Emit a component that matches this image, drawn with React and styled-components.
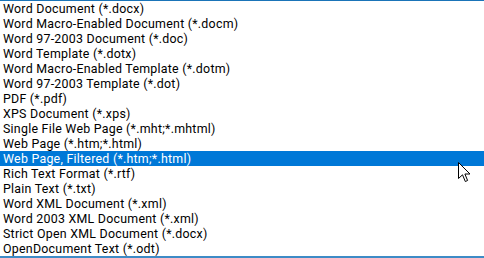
import React from 'react'
import styled, { createGlobalStyle } from 'styled-components'

const formats = [
    'Word Document (*.docx)',
    'Word Macro-Enabled Document (*.docm)',
    'Word 97-2003 Document (*.doc)',
    'Word Template (*.dotx)',
    'Word Macro-Enabled Template (*.dotm)',
    'Word 97-2003 Template (*.dot)',
    'PDF (*.pdf)',
    'XPS Document (*.xps)',
    'Single File Web Page (*.mht;*.mhtml)',
    'Web Page (*.htm;*.html)',
    'Web Page, Filtered (*.htm;*.html)',
    'Rich Text Format (*.rtf)',
    'Plain Text (*.txt)',
    'Word XML Document (*.xml)',
    'Word 2003 XML Document (*.xml)',
    'Strict Open XML Document (*.docx)',
    'OpenDocument Text (*.odt)',
]

const selected = 10

function App() {
    return (
        <>
            <GlobalStyle />
            <List>
                {formats.map((f, i) => (
                    <Item key={f} $active={i === selected}>
                        {f}
                        {i === selected && (
                            <Cursor width="13" height="21" viewBox="0 0 13 21">
                                <path
                                    d="M0.5 0.5 L0.5 16.5 L4.5 12.8 L7.3 19.5 L9.6 18.5 L6.9 12 L12 12 Z"
                                    fill="#fff"
                                    stroke="#000"
                                    strokeWidth="1"
                                />
                            </Cursor>
                        )}
                    </Item>
                ))}
            </List>
        </>
    )
}

const GlobalStyle = createGlobalStyle`
    html, body {
        margin: 0;
        padding: 0;
        background: #fff;
    }
`

const List = styled.ul`
    list-style: none;
    margin: 0;
    padding: 0;
    width: 484px;
    height: 258px;
    box-sizing: border-box;
    border-top: 1px solid #1a74b8;
    border-bottom: 2px solid #3d8bc6;
    background: #fff;
    font-family: Roboto, "Noto Sans", sans-serif;
    font-size: 12.4px;
    letter-spacing: 0.25px;
    overflow: hidden;
`

const Item = styled.li`
    position: relative;
    height: 15px;
    line-height: 15px;
    padding-left: 3px;
    white-space: nowrap;
    color: ${p => (p.$active ? '#fff' : '#000')};
    background: ${p => (p.$active ? '#0078d7' : 'transparent')};
`

const Cursor = styled.svg`
    position: absolute;
    left: 458px;
    top: 11px;
    z-index: 2;
`

export default App
